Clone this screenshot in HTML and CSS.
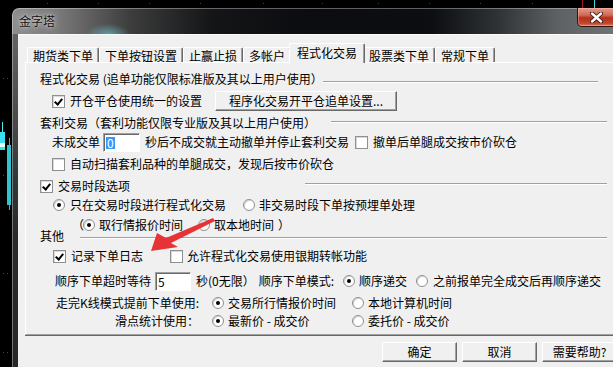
FILE: index.html
```html
<!DOCTYPE html>
<html lang="zh-CN">
<head>
    <meta charset="UTF-8">
    <title>金字塔</title>
    <link rel="stylesheet" href="styles.css">
</head>
<body>
    <svg class="chart" width="613" height="367" viewBox="0 0 613 367">
        <g fill="#b3121a">
            <rect x="47" y="3" width="1" height="1"/><rect x="98" y="3" width="1" height="1"/>
            <rect x="149" y="3" width="1" height="1"/><rect x="200" y="3" width="1" height="1"/>
            <rect x="263" y="3" width="1" height="1"/><rect x="322" y="3" width="1" height="1"/>
            <rect x="378" y="3" width="1" height="1"/><rect x="429" y="3" width="1" height="1"/>
            <rect x="480" y="3" width="1" height="1"/><rect x="532" y="3" width="1" height="1"/>
            <rect x="3" y="78" width="1" height="1"/><rect x="7" y="78" width="1" height="1"/>
            <rect x="3" y="175" width="1" height="1"/><rect x="7" y="175" width="1" height="1"/>
            <rect x="3" y="273" width="1" height="1"/><rect x="7" y="273" width="1" height="1"/>
            <rect x="3" y="352" width="1" height="1"/><rect x="7" y="352" width="1" height="1"/>
            <rect x="582" y="0" width="1" height="8"/>
        </g>
        <rect x="594" y="0" width="1" height="8" fill="#3fd6e0"/>
        <rect x="2" y="122" width="1" height="12" fill="#55e6f0"/>
        <rect x="0" y="132" width="5" height="18" fill="#3ce0ec"/>
        <rect x="0" y="143" width="5" height="4" fill="#e8ffff"/>
        <rect x="9" y="138" width="1" height="72" fill="#2cb8c4"/>
        <rect x="7" y="145" width="4" height="60" fill="#2cc4d0"/>
    </svg>

    <div class="window">
        <div class="titlebar">
            <span class="title">金字塔</span>
            <div class="close">
                <svg width="13" height="11" viewBox="0 0 13 11">
                    <path d="M2 1.5 L11 9.5 M11 1.5 L2 9.5" stroke="#3a1510" stroke-width="4.2" stroke-linecap="round"/>
                    <path d="M2 1.5 L11 9.5 M11 1.5 L2 9.5" stroke="#fff" stroke-width="2.4" stroke-linecap="round"/>
                </svg>
            </div>
        </div>

        <div class="client">
            <div class="tabs">
                <div class="tab">期货类下单</div>
                <div class="tab">下单按钮设置</div>
                <div class="tab">止赢止损</div>
                <div class="tab">多帐户</div>
                <div class="tab active">程式化交易</div>
                <div class="tab">股票类下单</div>
                <div class="tab">常规下单</div>
            </div>

            <div class="panel">
                <!-- 程式化交易 -->
                <div class="row">
                    <span class="gtitle w-prog">程式化交易 (追单功能仅限标准版及其以上用户使用）</span>
                    <span class="gline gline-a"></span>
                </div>
                <div class="row mt10 ind12">
                    <span class="chk on"></span>
                    <span class="lbl">开仓平仓使用统一的设置</span>
                    <span class="btn btn-wide">程序化交易开平仓追单设置...</span>
                </div>

                <!-- 套利交易 -->
                <div class="row mt10">
                    <span class="gtitle w-arb">套利交易（套利功能仅限专业版及其以上用户使用）</span>
                    <span class="gline gline-c"></span>
                </div>
                <div class="row mt7 ind12">
                    <span>未成交单</span>
                    <span class="edit edit-a"><span class="sel">0</span></span>
                    <span class="after-edit">秒后不成交就主动撤单并停止套利交易</span>
                    <span class="chk chk-gap"></span>
                    <span class="lbl">撤单后单腿成交按市价砍仓</span>
                </div>
                <div class="row mt10 ind12">
                    <span class="chk"></span>
                    <span class="lbl">自动扫描套利品种的单腿成交，发现后按市价砍仓</span>
                </div>

                <!-- 交易时段 -->
                <div class="row mt10">
                    <span class="gtitle w-time"><span class="chk on"></span><span class="lbl">交易时段选项</span></span>
                    <span class="gline gline-f"></span>
                </div>
                <div class="row mt7 ind13">
                    <span class="radio on"></span>
                    <span class="lbl">只在交易时段进行程式化交易</span>
                    <span class="radio radio-gap"></span>
                    <span class="rlbl">非交易时段下单按预埋单处理</span>
                </div>
                <div class="row mt8 ind32">
                    <span>（</span>
                    <span class="radio on paren-gap"></span>
                    <span class="rlbl">取行情报价时间</span>
                    <span class="radio radio-gap2"></span>
                    <span class="rlbl">取本地时间</span>
                    <span class="close-paren">）</span>
                </div>

                <!-- 其他 -->
                <div class="row mt-1">
                    <span class="gtitle w-other">其他</span>
                    <span class="gline gline-i"></span>
                </div>
                <div class="row mt8 ind13">
                    <span class="chk on"></span>
                    <span class="lbl">记录下单日志</span>
                    <span class="chk chk-gap2"></span>
                    <span class="rlbl">允许程式化交易使用银期转帐功能</span>
                </div>
                <div class="row mt13 ind15">
                    <span>顺序下单超时等待</span>
                    <span class="edit edit-b">5</span>
                    <span class="after-edit">秒(0无限）</span>
                    <span class="mode">顺序下单模式:</span>
                    <span class="radio on mode-gap"></span>
                    <span class="rlbl">顺序递交</span>
                    <span class="radio mode-gap2"></span>
                    <span class="lbl">之前报单完全成交后再顺序递交</span>
                </div>
                <div class="row grid3 mt10">
                    <span class="glabel">走完K线模式提前下单使用:</span>
                    <span class="opt"><span class="radio on"></span><span class="rlbl">交易所行情报价时间</span></span>
                    <span class="opt"><span class="radio"></span><span class="rlbl">本地计算机时间</span></span>
                </div>
                <div class="row grid3 mt6">
                    <span class="glabel">滑点统计使用：</span>
                    <span class="opt"><span class="radio on"></span><span class="rlbl">最新价 - 成交价</span></span>
                    <span class="opt"><span class="radio"></span><span class="rlbl">委托价 - 成交价</span></span>
                </div>
            </div>

            <div class="footer">
                <span class="btn btn-dlg">确定</span>
                <span class="btn btn-dlg">取消</span>
                <span class="btn btn-dlg">需要帮助?</span>
            </div>
        </div>
    </div>

    <!-- 红色标注箭头 -->
    <svg class="arrow" width="70" height="40" viewBox="148 216 70 40">
        <polygon points="151,251 157,233 166,238 213,218 215,221 171,243 178,247" fill="#e63338"/>
    </svg>
</body>
</html>
```

FILE: styles.css
```css
* {
    margin: 0;
    padding: 0;
    box-sizing: border-box;
}

body {
    width: 613px;
    height: 367px;
    overflow: hidden;
    position: relative;
    background: #000;
    font-family: "Noto Sans CJK SC", "Liberation Sans", sans-serif;
    font-size: 12px;
    line-height: 12px;
    color: #000;
}

.chart {
    position: absolute;
    left: 0;
    top: 0;
}

/* 窗口 */
.window {
    position: absolute;
    left: 12px;
    top: 8px;
    width: 608px;
    height: 370px;
    border-radius: 7px 7px 0 0;
    background:
        radial-gradient(ellipse 22px 10px at 96px 26px, rgba(110, 215, 230, 0.55), rgba(110, 215, 230, 0) 100%) no-repeat,
        linear-gradient(to right, #8e8e8e 0, #7a7a7a 45px, #3c3c3c 120px, #141517 200px, #0b0c0f 300px, #0c0e11 420px, #2f3235 485px, #5d6163 545px, #6e7274 600px) no-repeat 0 0 / 100% 26px,
        linear-gradient(to bottom, #6a6a6a 0, #4a4a4a 30%, #2e3a3c 45%, #2a2a2a 60%, #262626 100%);
    box-shadow: inset 0 0 0 1px rgba(255, 255, 255, 0.35);
}

.titlebar {
    height: 26px;
    display: flex;
    align-items: center;
    padding-left: 7px;
}

.title {
    font-size: 12px;
    color: #111;
    text-shadow: 0 0 6px rgba(255, 255, 255, 0.8), 0 0 2px rgba(255, 255, 255, 0.6);
}

.close {
    margin-left: auto;
    align-self: flex-start;
    width: 43px;
    height: 19px;
    display: flex;
    align-items: center;
    justify-content: center;
    padding-right: 4px;
    border: 1px solid #2e1612;
    border-top: 0;
    border-radius: 0 0 0 5px;
    background: linear-gradient(to bottom, #e49a8c 0, #d06a56 40%, #b3301c 55%, #c0472e 85%, #e07a5c 100%);
    box-shadow: inset 0 0 0 1px rgba(255, 200, 190, 0.4);
}

.client {
    margin-left: 6px;
    height: 344px;
    background: #f0f0f0;
    border-top: 1px solid #fcfcfc;
    padding-top: 8px;
}

/* 选项卡 */
.tabs {
    display: flex;
    align-items: flex-end;
    height: 19px;
    margin-left: 9px;
}

.tab {
    height: 15px;
    padding: 1px 5px 0;
    display: flex;
    align-items: center;
    white-space: nowrap;
    background: #f0f0f0;
    border-top: 1px solid #fff;
    border-left: 1px solid #fff;
    border-right: 1px solid #696969;
    box-shadow: inset -1px 0 0 #a0a0a0;
    border-radius: 2px 2px 0 0;
}

.tab.active {
    height: 20px;
    margin: 0 -2px -1px;
    padding: 0 7px 2px;
    position: relative;
    z-index: 1;
}

.panel {
    margin-left: 7px;
    height: 273px;
    border-top: 1px solid #fff;
    border-left: 1px solid #fff;
    border-bottom: 1px solid #a0a0a0;
    box-shadow: 0 1px 0 #696969;
    padding: 10px 0 0 14px;
}

.row {
    width: 567px;
    height: 12px;
    display: flex;
    align-items: center;
    white-space: nowrap;
}

.mt-1 { margin-top: -1px; }
.mt6 { margin-top: 6px; }
.mt7 { margin-top: 7px; }
.mt8 { margin-top: 8px; }
.mt10 { margin-top: 10px; }
.mt13 { margin-top: 13px; }

.ind12 { padding-left: 12px; }
.ind13 { padding-left: 13px; }
.ind15 { padding-left: 15px; }
.ind32 { padding-left: 32px; }

/* 分组标题与蚀刻线 */
.gtitle {
    display: flex;
    align-items: center;
    flex-shrink: 0;
}

.w-prog { width: 283px; }
.w-arb { width: 291px; }
.w-time { width: 265px; }
.w-other { width: 40px; }

.gline {
    flex: 1;
    align-self: flex-start;
    height: 2px;
    border-top: 1px solid #a0a0a0;
    border-bottom: 1px solid #fff;
}

.gline-a { margin-top: 8px; margin-right: 9px; }
.gline-c { margin-top: 4px; }
.gline-f { margin-top: 3px; }
.gline-i { margin-top: 7px; }

/* 复选框、单选框 */
.chk {
    flex-shrink: 0;
    width: 13px;
    height: 13px;
    background: #fff;
    border: 1px solid #8e8f8f;
    box-shadow: inset 1px 1px 0 #d8d8d8;
    position: relative;
}

.chk.on::after {
    content: "";
    position: absolute;
    left: 3px;
    top: 1px;
    width: 3px;
    height: 6px;
    border-right: 2px solid #000;
    border-bottom: 2px solid #000;
    transform: rotate(40deg);
}

.radio {
    flex-shrink: 0;
    width: 12px;
    height: 12px;
    border-radius: 50%;
    background: #fff;
    border: 1px solid #8e8f8f;
    box-shadow: inset 1px 1px 0 #d4d4d4;
    position: relative;
}

.radio.on::after {
    content: "";
    position: absolute;
    left: 3px;
    top: 3px;
    width: 4px;
    height: 4px;
    border-radius: 50%;
    background: #000;
}

.lbl { margin-left: 5px; }
.rlbl { margin-left: 4px; }

.chk-gap { margin-left: 6px; }
.chk-gap2 { margin-left: 27px; }
.radio-gap { margin-left: 17px; }
.radio-gap2 { margin-left: 15px; }
.paren-gap { margin-left: -1px; }
.close-paren { margin-left: 4px; }

/* 输入框 */
.edit {
    flex-shrink: 0;
    height: 19px;
    margin-left: 3px;
    padding: 3px 0 0 2px;
    background: #fff;
    border: 1px solid;
    border-color: #a0a0a0 #fff #fff #a0a0a0;
    box-shadow: inset 1px 1px 0 #696969;
}

.edit-a { width: 37px; }
.edit-b { width: 36px; margin-left: 4px; }

.sel {
    display: inline-block;
    padding: 0 1px;
    background: #3399ff;
    color: #fff;
}

.after-edit { margin-left: 5px; }

.mode { margin-left: 4px; }
.mode-gap { margin-left: 9px; }
.mode-gap2 { margin-left: 9px; }

.grid3 {
    display: grid;
    grid-template-columns: 172px 140px auto;
    align-items: center;
}

.glabel {
    text-align: right;
    padding-right: 13px;
}

.opt {
    display: flex;
    align-items: center;
}

/* 按钮 */
.btn {
    display: flex;
    align-items: center;
    justify-content: center;
    height: 20px;
    background: #f0f0f0;
    border: 1px solid;
    border-color: #fff #696969 #696969 #fff;
    box-shadow: inset -1px -1px 0 #a0a0a0;
    white-space: nowrap;
}

.btn-wide {
    width: 182px;
    margin-left: 13px;
}

.footer {
    display: flex;
    gap: 5px;
    margin: 7px 0 0 364px;
}

.btn-dlg {
    width: 75px;
    flex-shrink: 0;
}

.arrow {
    position: absolute;
    left: 148px;
    top: 216px;
}
```
